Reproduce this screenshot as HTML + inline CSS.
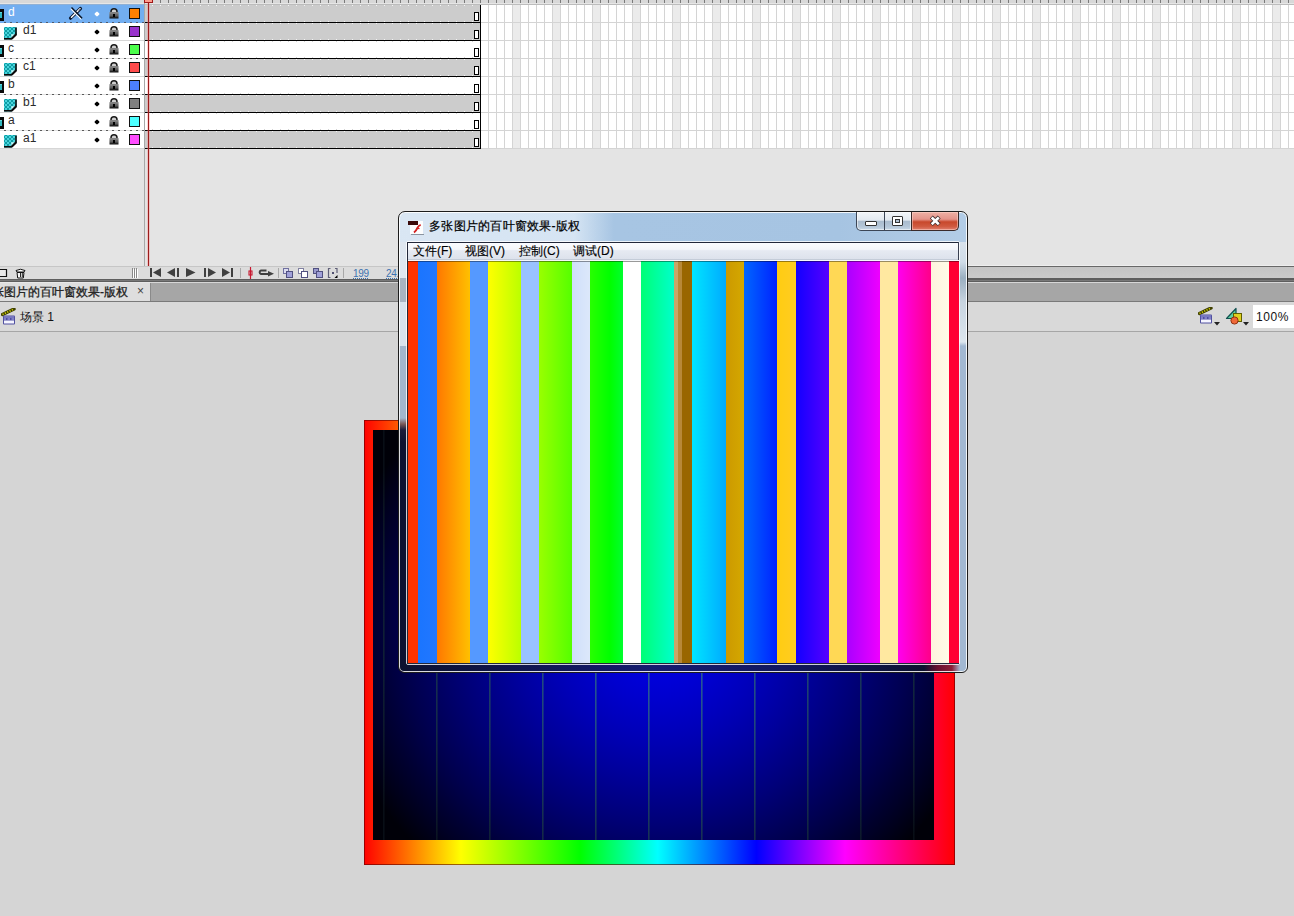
<!DOCTYPE html><html><head><meta charset="utf-8"><style>
*{margin:0;padding:0;box-sizing:border-box}
html,body{width:1294px;height:916px;overflow:hidden;background:#d5d5d5;font-family:"Liberation Sans",sans-serif;}
.a{position:absolute}
</style></head><body><div class="a" style="left:0;top:0;width:1294px;height:266px;background:#e4e4e4"></div>
<div class="a" style="left:0;top:0;width:1294px;height:4px;background:#d8d8d8"></div>
<div class="a" style="left:145px;top:0;width:1149px;height:4px;background:repeating-linear-gradient(to right,transparent 0 7px,#7a7a7a 7px 8px)"></div>
<div class="a" style="left:0;top:3px;width:1294px;height:1px;background:#e6e6e6"></div>
<div class="a" style="left:0;top:4px;width:144px;height:1px;background:#90b0d4"></div>
<div class="a" style="left:144px;top:4px;width:1150px;height:1px;background:#bcbcbc"></div>
<div class="a" style="left:145px;top:5px;width:1149px;height:144px;background:#fff"></div>
<div class="a" style="left:512px;top:5px;width:782px;height:144px;background:repeating-linear-gradient(to right,transparent 0 1px,#ebebeb 1px 8px,transparent 8px 40px)"></div>
<div class="a" style="left:145px;top:5px;width:1149px;height:144px;background:repeating-linear-gradient(to right,transparent 0 7px,#d4d4d4 7px 8px)"></div>
<div class="a" style="left:145px;top:5px;width:1149px;height:144px;background:repeating-linear-gradient(to bottom,transparent 0 17px,#d4d4d4 17px 18px)"></div>
<div class="a" style="left:0;top:5px;width:144px;height:17px;background:#72aef0"></div>
<div class="a" style="left:0;top:22px;width:144px;height:1px;background:repeating-linear-gradient(to right,#72aef0 0 4px,#4e5a6c 4px 6px)"></div>
<svg class="a" style="left:0;top:9px" width="5" height="13" viewBox="0 0 5 13"><rect x="-8" y="0" width="12" height="12" fill="#0a0a0a"/><rect x="-6" y="3" width="8" height="6" fill="#30b8c0"/><rect x="-6" y="3" width="8" height="1" fill="#60d8e0"/></svg>
<div class="a" style="left:8px;top:5px;font-size:12px;line-height:14px;color:#fff">d</div>
<svg class="a" style="left:66px;top:4px" width="18" height="18" viewBox="0 0 18 18"><path d="M4.5 14.2L14.5 4.5" stroke="#0a1830" stroke-width="3.2" stroke-linecap="round"/><path d="M5.5 13.2L14 4.8" stroke="#fff" stroke-width="1.5" stroke-linecap="round"/><path d="M13 6.5L14.5 5" stroke="#0a1830" stroke-width="1"/><path d="M4.8 4.6L15.4 15.3" stroke="#fff" stroke-width="1.1"/><path d="M5.5 3.6L16.1 14.3" stroke="#061020" stroke-width="1.4"/></svg>
<div class="a" style="left:94.5px;top:11.5px;width:4px;height:4px;background:#fff;border-radius:1px;transform:rotate(45deg)"></div>
<svg class="a" style="left:109px;top:8px" width="10" height="11" viewBox="0 0 10 11"><defs><linearGradient id="lk0" x1="0" y1="0" x2="0" y2="1"><stop offset="0" stop-color="#8a8a8a"/><stop offset="1" stop-color="#101010"/></linearGradient></defs><path d="M2 4.5V3.8A3 3 0 0 1 8 3.8V4.5" fill="#cfcfcf" stroke="#1a1a1a" stroke-width="1.5"/><rect x="0.5" y="4" width="9" height="6.5" fill="url(#lk0)"/><rect x="0.5" y="5.5" width="9" height="0.8" fill="#aaa" opacity="0.6"/><rect x="0.5" y="7.5" width="9" height="0.8" fill="#aaa" opacity="0.5"/><rect x="4" y="6" width="2" height="3" fill="#000"/></svg>
<div class="a" style="left:129px;top:8px;width:11px;height:11px;background:#ff8000;border:1.5px solid #111"></div>
<div class="a" style="left:145px;top:5px;width:335px;height:17px;background:#cccccc"></div>
<div class="a" style="left:145px;top:5px;width:335px;height:1px;background:repeating-linear-gradient(to right,transparent 0 7px,#f4f4f4 7px 8px)"></div>
<div class="a" style="left:145px;top:21px;width:335px;height:1px;background:repeating-linear-gradient(to right,transparent 0 7px,#f4f4f4 7px 8px)"></div>
<div class="a" style="left:145px;top:22px;width:336px;height:1px;background:#000"></div>
<div class="a" style="left:480px;top:5px;width:1px;height:17px;background:#000"></div>
<div class="a" style="left:474px;top:12px;width:5px;height:9px;background:#fff;border:1px solid #000"></div>
<div class="a" style="left:0;top:23px;width:144px;height:17px;background:#ffffff"></div>
<div class="a" style="left:0;top:40px;width:144px;height:1px;background:#d6d6d6"></div>
<svg class="a" style="left:4px;top:27px" width="14" height="13" viewBox="0 0 14 13"><defs><pattern id="ck1" width="4" height="4" patternUnits="userSpaceOnUse" x="1" y="1"><rect width="4" height="4" fill="#109ca4"/><rect width="2" height="2" fill="#48d4dc"/><rect x="2" y="2" width="2" height="2" fill="#48d4dc"/></pattern></defs><path d="M0 0H12.5V7.5L7.5 12.5H0Z" fill="url(#ck1)"/><path d="M12 0.5V7.8L7.8 12" fill="none" stroke="#0a0a0a" stroke-width="1.6"/><path d="M0 11.8H7.6" stroke="#0a0a0a" stroke-width="1.6"/><path d="M7.5 11V7.5H11" fill="none"/><path d="M7.3 11.3L7.3 7.3L11.3 7.3Z" fill="#c4f6f8"/><path d="M6.8 12.2L12.2 6.8" stroke="#0a0a0a" stroke-width="1.5"/></svg>
<div class="a" style="left:23px;top:23px;font-size:12px;line-height:14px;color:#2a2a2a">d1</div>
<div class="a" style="left:94.5px;top:29.5px;width:4px;height:4px;background:#000;border-radius:1px;transform:rotate(45deg)"></div>
<svg class="a" style="left:109px;top:26px" width="10" height="11" viewBox="0 0 10 11"><defs><linearGradient id="lk1" x1="0" y1="0" x2="0" y2="1"><stop offset="0" stop-color="#8a8a8a"/><stop offset="1" stop-color="#101010"/></linearGradient></defs><path d="M2 4.5V3.8A3 3 0 0 1 8 3.8V4.5" fill="#cfcfcf" stroke="#1a1a1a" stroke-width="1.5"/><rect x="0.5" y="4" width="9" height="6.5" fill="url(#lk1)"/><rect x="0.5" y="5.5" width="9" height="0.8" fill="#aaa" opacity="0.6"/><rect x="0.5" y="7.5" width="9" height="0.8" fill="#aaa" opacity="0.5"/><rect x="4" y="6" width="2" height="3" fill="#000"/></svg>
<div class="a" style="left:129px;top:26px;width:11px;height:11px;background:#9933cc;border:1.5px solid #111"></div>
<div class="a" style="left:145px;top:23px;width:335px;height:17px;background:#cccccc"></div>
<div class="a" style="left:145px;top:23px;width:335px;height:1px;background:repeating-linear-gradient(to right,transparent 0 7px,#f4f4f4 7px 8px)"></div>
<div class="a" style="left:145px;top:39px;width:335px;height:1px;background:repeating-linear-gradient(to right,transparent 0 7px,#f4f4f4 7px 8px)"></div>
<div class="a" style="left:145px;top:40px;width:336px;height:1px;background:#000"></div>
<div class="a" style="left:480px;top:23px;width:1px;height:17px;background:#000"></div>
<div class="a" style="left:474px;top:30px;width:5px;height:9px;background:#fff;border:1px solid #000"></div>
<div class="a" style="left:0;top:41px;width:144px;height:17px;background:#ffffff"></div>
<div class="a" style="left:0;top:58px;width:144px;height:1px;background:repeating-linear-gradient(to right,#e0e0e0 0 4px,#5a5a5a 4px 6px)"></div>
<svg class="a" style="left:0;top:45px" width="5" height="13" viewBox="0 0 5 13"><rect x="-8" y="0" width="12" height="12" fill="#0a0a0a"/><rect x="-6" y="3" width="8" height="6" fill="#30b8c0"/><rect x="-6" y="3" width="8" height="1" fill="#60d8e0"/></svg>
<div class="a" style="left:8px;top:41px;font-size:12px;line-height:14px;color:#2a2a2a">c</div>
<div class="a" style="left:94.5px;top:47.5px;width:4px;height:4px;background:#000;border-radius:1px;transform:rotate(45deg)"></div>
<svg class="a" style="left:109px;top:44px" width="10" height="11" viewBox="0 0 10 11"><defs><linearGradient id="lk2" x1="0" y1="0" x2="0" y2="1"><stop offset="0" stop-color="#8a8a8a"/><stop offset="1" stop-color="#101010"/></linearGradient></defs><path d="M2 4.5V3.8A3 3 0 0 1 8 3.8V4.5" fill="#cfcfcf" stroke="#1a1a1a" stroke-width="1.5"/><rect x="0.5" y="4" width="9" height="6.5" fill="url(#lk2)"/><rect x="0.5" y="5.5" width="9" height="0.8" fill="#aaa" opacity="0.6"/><rect x="0.5" y="7.5" width="9" height="0.8" fill="#aaa" opacity="0.5"/><rect x="4" y="6" width="2" height="3" fill="#000"/></svg>
<div class="a" style="left:129px;top:44px;width:11px;height:11px;background:#4cff4c;border:1.5px solid #111"></div>
<div class="a" style="left:145px;top:41px;width:335px;height:17px;background:#ffffff"></div>
<div class="a" style="left:145px;top:41px;width:335px;height:1px;background:repeating-linear-gradient(to right,transparent 0 7px,#d4d4d4 7px 8px)"></div>
<div class="a" style="left:145px;top:57px;width:335px;height:1px;background:repeating-linear-gradient(to right,transparent 0 7px,#d4d4d4 7px 8px)"></div>
<div class="a" style="left:145px;top:58px;width:336px;height:1px;background:#000"></div>
<div class="a" style="left:480px;top:41px;width:1px;height:17px;background:#000"></div>
<div class="a" style="left:474px;top:48px;width:5px;height:9px;background:#fff;border:1px solid #000"></div>
<div class="a" style="left:0;top:59px;width:144px;height:17px;background:#ffffff"></div>
<div class="a" style="left:0;top:76px;width:144px;height:1px;background:#d6d6d6"></div>
<svg class="a" style="left:4px;top:63px" width="14" height="13" viewBox="0 0 14 13"><defs><pattern id="ck3" width="4" height="4" patternUnits="userSpaceOnUse" x="1" y="1"><rect width="4" height="4" fill="#109ca4"/><rect width="2" height="2" fill="#48d4dc"/><rect x="2" y="2" width="2" height="2" fill="#48d4dc"/></pattern></defs><path d="M0 0H12.5V7.5L7.5 12.5H0Z" fill="url(#ck3)"/><path d="M12 0.5V7.8L7.8 12" fill="none" stroke="#0a0a0a" stroke-width="1.6"/><path d="M0 11.8H7.6" stroke="#0a0a0a" stroke-width="1.6"/><path d="M7.5 11V7.5H11" fill="none"/><path d="M7.3 11.3L7.3 7.3L11.3 7.3Z" fill="#c4f6f8"/><path d="M6.8 12.2L12.2 6.8" stroke="#0a0a0a" stroke-width="1.5"/></svg>
<div class="a" style="left:23px;top:59px;font-size:12px;line-height:14px;color:#2a2a2a">c1</div>
<div class="a" style="left:94.5px;top:65.5px;width:4px;height:4px;background:#000;border-radius:1px;transform:rotate(45deg)"></div>
<svg class="a" style="left:109px;top:62px" width="10" height="11" viewBox="0 0 10 11"><defs><linearGradient id="lk3" x1="0" y1="0" x2="0" y2="1"><stop offset="0" stop-color="#8a8a8a"/><stop offset="1" stop-color="#101010"/></linearGradient></defs><path d="M2 4.5V3.8A3 3 0 0 1 8 3.8V4.5" fill="#cfcfcf" stroke="#1a1a1a" stroke-width="1.5"/><rect x="0.5" y="4" width="9" height="6.5" fill="url(#lk3)"/><rect x="0.5" y="5.5" width="9" height="0.8" fill="#aaa" opacity="0.6"/><rect x="0.5" y="7.5" width="9" height="0.8" fill="#aaa" opacity="0.5"/><rect x="4" y="6" width="2" height="3" fill="#000"/></svg>
<div class="a" style="left:129px;top:62px;width:11px;height:11px;background:#ff4c4c;border:1.5px solid #111"></div>
<div class="a" style="left:145px;top:59px;width:335px;height:17px;background:#cccccc"></div>
<div class="a" style="left:145px;top:59px;width:335px;height:1px;background:repeating-linear-gradient(to right,transparent 0 7px,#f4f4f4 7px 8px)"></div>
<div class="a" style="left:145px;top:75px;width:335px;height:1px;background:repeating-linear-gradient(to right,transparent 0 7px,#f4f4f4 7px 8px)"></div>
<div class="a" style="left:145px;top:76px;width:336px;height:1px;background:#000"></div>
<div class="a" style="left:480px;top:59px;width:1px;height:17px;background:#000"></div>
<div class="a" style="left:474px;top:66px;width:5px;height:9px;background:#fff;border:1px solid #000"></div>
<div class="a" style="left:0;top:77px;width:144px;height:17px;background:#ffffff"></div>
<div class="a" style="left:0;top:94px;width:144px;height:1px;background:repeating-linear-gradient(to right,#e0e0e0 0 4px,#5a5a5a 4px 6px)"></div>
<svg class="a" style="left:0;top:81px" width="5" height="13" viewBox="0 0 5 13"><rect x="-8" y="0" width="12" height="12" fill="#0a0a0a"/><rect x="-6" y="3" width="8" height="6" fill="#30b8c0"/><rect x="-6" y="3" width="8" height="1" fill="#60d8e0"/></svg>
<div class="a" style="left:8px;top:77px;font-size:12px;line-height:14px;color:#2a2a2a">b</div>
<div class="a" style="left:94.5px;top:83.5px;width:4px;height:4px;background:#000;border-radius:1px;transform:rotate(45deg)"></div>
<svg class="a" style="left:109px;top:80px" width="10" height="11" viewBox="0 0 10 11"><defs><linearGradient id="lk4" x1="0" y1="0" x2="0" y2="1"><stop offset="0" stop-color="#8a8a8a"/><stop offset="1" stop-color="#101010"/></linearGradient></defs><path d="M2 4.5V3.8A3 3 0 0 1 8 3.8V4.5" fill="#cfcfcf" stroke="#1a1a1a" stroke-width="1.5"/><rect x="0.5" y="4" width="9" height="6.5" fill="url(#lk4)"/><rect x="0.5" y="5.5" width="9" height="0.8" fill="#aaa" opacity="0.6"/><rect x="0.5" y="7.5" width="9" height="0.8" fill="#aaa" opacity="0.5"/><rect x="4" y="6" width="2" height="3" fill="#000"/></svg>
<div class="a" style="left:129px;top:80px;width:11px;height:11px;background:#4c7fff;border:1.5px solid #111"></div>
<div class="a" style="left:145px;top:77px;width:335px;height:17px;background:#ffffff"></div>
<div class="a" style="left:145px;top:77px;width:335px;height:1px;background:repeating-linear-gradient(to right,transparent 0 7px,#d4d4d4 7px 8px)"></div>
<div class="a" style="left:145px;top:93px;width:335px;height:1px;background:repeating-linear-gradient(to right,transparent 0 7px,#d4d4d4 7px 8px)"></div>
<div class="a" style="left:145px;top:94px;width:336px;height:1px;background:#000"></div>
<div class="a" style="left:480px;top:77px;width:1px;height:17px;background:#000"></div>
<div class="a" style="left:474px;top:84px;width:5px;height:9px;background:#fff;border:1px solid #000"></div>
<div class="a" style="left:0;top:95px;width:144px;height:17px;background:#ffffff"></div>
<div class="a" style="left:0;top:112px;width:144px;height:1px;background:#d6d6d6"></div>
<svg class="a" style="left:4px;top:99px" width="14" height="13" viewBox="0 0 14 13"><defs><pattern id="ck5" width="4" height="4" patternUnits="userSpaceOnUse" x="1" y="1"><rect width="4" height="4" fill="#109ca4"/><rect width="2" height="2" fill="#48d4dc"/><rect x="2" y="2" width="2" height="2" fill="#48d4dc"/></pattern></defs><path d="M0 0H12.5V7.5L7.5 12.5H0Z" fill="url(#ck5)"/><path d="M12 0.5V7.8L7.8 12" fill="none" stroke="#0a0a0a" stroke-width="1.6"/><path d="M0 11.8H7.6" stroke="#0a0a0a" stroke-width="1.6"/><path d="M7.5 11V7.5H11" fill="none"/><path d="M7.3 11.3L7.3 7.3L11.3 7.3Z" fill="#c4f6f8"/><path d="M6.8 12.2L12.2 6.8" stroke="#0a0a0a" stroke-width="1.5"/></svg>
<div class="a" style="left:23px;top:95px;font-size:12px;line-height:14px;color:#2a2a2a">b1</div>
<div class="a" style="left:94.5px;top:101.5px;width:4px;height:4px;background:#000;border-radius:1px;transform:rotate(45deg)"></div>
<svg class="a" style="left:109px;top:98px" width="10" height="11" viewBox="0 0 10 11"><defs><linearGradient id="lk5" x1="0" y1="0" x2="0" y2="1"><stop offset="0" stop-color="#8a8a8a"/><stop offset="1" stop-color="#101010"/></linearGradient></defs><path d="M2 4.5V3.8A3 3 0 0 1 8 3.8V4.5" fill="#cfcfcf" stroke="#1a1a1a" stroke-width="1.5"/><rect x="0.5" y="4" width="9" height="6.5" fill="url(#lk5)"/><rect x="0.5" y="5.5" width="9" height="0.8" fill="#aaa" opacity="0.6"/><rect x="0.5" y="7.5" width="9" height="0.8" fill="#aaa" opacity="0.5"/><rect x="4" y="6" width="2" height="3" fill="#000"/></svg>
<div class="a" style="left:129px;top:98px;width:11px;height:11px;background:#808080;border:1.5px solid #111"></div>
<div class="a" style="left:145px;top:95px;width:335px;height:17px;background:#cccccc"></div>
<div class="a" style="left:145px;top:95px;width:335px;height:1px;background:repeating-linear-gradient(to right,transparent 0 7px,#f4f4f4 7px 8px)"></div>
<div class="a" style="left:145px;top:111px;width:335px;height:1px;background:repeating-linear-gradient(to right,transparent 0 7px,#f4f4f4 7px 8px)"></div>
<div class="a" style="left:145px;top:112px;width:336px;height:1px;background:#000"></div>
<div class="a" style="left:480px;top:95px;width:1px;height:17px;background:#000"></div>
<div class="a" style="left:474px;top:102px;width:5px;height:9px;background:#fff;border:1px solid #000"></div>
<div class="a" style="left:0;top:113px;width:144px;height:17px;background:#ffffff"></div>
<div class="a" style="left:0;top:130px;width:144px;height:1px;background:repeating-linear-gradient(to right,#e0e0e0 0 4px,#5a5a5a 4px 6px)"></div>
<svg class="a" style="left:0;top:117px" width="5" height="13" viewBox="0 0 5 13"><rect x="-8" y="0" width="12" height="12" fill="#0a0a0a"/><rect x="-6" y="3" width="8" height="6" fill="#30b8c0"/><rect x="-6" y="3" width="8" height="1" fill="#60d8e0"/></svg>
<div class="a" style="left:8px;top:113px;font-size:12px;line-height:14px;color:#2a2a2a">a</div>
<div class="a" style="left:94.5px;top:119.5px;width:4px;height:4px;background:#000;border-radius:1px;transform:rotate(45deg)"></div>
<svg class="a" style="left:109px;top:116px" width="10" height="11" viewBox="0 0 10 11"><defs><linearGradient id="lk6" x1="0" y1="0" x2="0" y2="1"><stop offset="0" stop-color="#8a8a8a"/><stop offset="1" stop-color="#101010"/></linearGradient></defs><path d="M2 4.5V3.8A3 3 0 0 1 8 3.8V4.5" fill="#cfcfcf" stroke="#1a1a1a" stroke-width="1.5"/><rect x="0.5" y="4" width="9" height="6.5" fill="url(#lk6)"/><rect x="0.5" y="5.5" width="9" height="0.8" fill="#aaa" opacity="0.6"/><rect x="0.5" y="7.5" width="9" height="0.8" fill="#aaa" opacity="0.5"/><rect x="4" y="6" width="2" height="3" fill="#000"/></svg>
<div class="a" style="left:129px;top:116px;width:11px;height:11px;background:#4cffff;border:1.5px solid #111"></div>
<div class="a" style="left:145px;top:113px;width:335px;height:17px;background:#ffffff"></div>
<div class="a" style="left:145px;top:113px;width:335px;height:1px;background:repeating-linear-gradient(to right,transparent 0 7px,#d4d4d4 7px 8px)"></div>
<div class="a" style="left:145px;top:129px;width:335px;height:1px;background:repeating-linear-gradient(to right,transparent 0 7px,#d4d4d4 7px 8px)"></div>
<div class="a" style="left:145px;top:130px;width:336px;height:1px;background:#000"></div>
<div class="a" style="left:480px;top:113px;width:1px;height:17px;background:#000"></div>
<div class="a" style="left:474px;top:120px;width:5px;height:9px;background:#fff;border:1px solid #000"></div>
<div class="a" style="left:0;top:131px;width:144px;height:17px;background:#ffffff"></div>
<div class="a" style="left:0;top:148px;width:144px;height:1px;background:#d6d6d6"></div>
<svg class="a" style="left:4px;top:135px" width="14" height="13" viewBox="0 0 14 13"><defs><pattern id="ck7" width="4" height="4" patternUnits="userSpaceOnUse" x="1" y="1"><rect width="4" height="4" fill="#109ca4"/><rect width="2" height="2" fill="#48d4dc"/><rect x="2" y="2" width="2" height="2" fill="#48d4dc"/></pattern></defs><path d="M0 0H12.5V7.5L7.5 12.5H0Z" fill="url(#ck7)"/><path d="M12 0.5V7.8L7.8 12" fill="none" stroke="#0a0a0a" stroke-width="1.6"/><path d="M0 11.8H7.6" stroke="#0a0a0a" stroke-width="1.6"/><path d="M7.5 11V7.5H11" fill="none"/><path d="M7.3 11.3L7.3 7.3L11.3 7.3Z" fill="#c4f6f8"/><path d="M6.8 12.2L12.2 6.8" stroke="#0a0a0a" stroke-width="1.5"/></svg>
<div class="a" style="left:23px;top:131px;font-size:12px;line-height:14px;color:#2a2a2a">a1</div>
<div class="a" style="left:94.5px;top:137.5px;width:4px;height:4px;background:#000;border-radius:1px;transform:rotate(45deg)"></div>
<svg class="a" style="left:109px;top:134px" width="10" height="11" viewBox="0 0 10 11"><defs><linearGradient id="lk7" x1="0" y1="0" x2="0" y2="1"><stop offset="0" stop-color="#8a8a8a"/><stop offset="1" stop-color="#101010"/></linearGradient></defs><path d="M2 4.5V3.8A3 3 0 0 1 8 3.8V4.5" fill="#cfcfcf" stroke="#1a1a1a" stroke-width="1.5"/><rect x="0.5" y="4" width="9" height="6.5" fill="url(#lk7)"/><rect x="0.5" y="5.5" width="9" height="0.8" fill="#aaa" opacity="0.6"/><rect x="0.5" y="7.5" width="9" height="0.8" fill="#aaa" opacity="0.5"/><rect x="4" y="6" width="2" height="3" fill="#000"/></svg>
<div class="a" style="left:129px;top:134px;width:11px;height:11px;background:#ff4cff;border:1.5px solid #111"></div>
<div class="a" style="left:145px;top:131px;width:335px;height:17px;background:#cccccc"></div>
<div class="a" style="left:145px;top:131px;width:335px;height:1px;background:repeating-linear-gradient(to right,transparent 0 7px,#f4f4f4 7px 8px)"></div>
<div class="a" style="left:145px;top:147px;width:335px;height:1px;background:repeating-linear-gradient(to right,transparent 0 7px,#f4f4f4 7px 8px)"></div>
<div class="a" style="left:145px;top:148px;width:336px;height:1px;background:#000"></div>
<div class="a" style="left:480px;top:131px;width:1px;height:17px;background:#000"></div>
<div class="a" style="left:474px;top:138px;width:5px;height:9px;background:#fff;border:1px solid #000"></div>
<div class="a" style="left:144px;top:0;width:1px;height:279px;background:#a8a8a8"></div>
<div class="a" style="left:147px;top:0;width:3px;height:266px;background:rgba(255,120,120,0.3)"></div>
<div class="a" style="left:148px;top:0;width:1px;height:266px;background:#9c1c1c"></div>
<div class="a" style="left:144px;top:-1px;width:9px;height:4px;background:#ff9c8c;border:1px solid #a01818"></div>
<div class="a" style="left:0;top:266px;width:1294px;height:13px;background:#dcdcdc;border-top:1px solid #c6c6c6"></div>
<div class="a" style="left:398px;top:265px;width:896px;height:1px;background:#eeeeee"></div>
<div class="a" style="left:398px;top:266px;width:896px;height:12px;background:linear-gradient(#c4c4c4,#cacaca);border-top:1px solid #686868"></div>
<div class="a" style="left:398px;top:278px;width:896px;height:1px;background:#5e5e5e"></div>
<div class="a" style="left:0;top:279px;width:1294px;height:3px;background:linear-gradient(#5e5e5e 0 1px,#787878 1px 2px,#5e5e5e 2px 3px)"></div>
<div class="a" style="left:0;top:282px;width:1294px;height:1px;background:#d6d6d6"></div>
<svg class="a" style="left:0;top:266px" width="400" height="13" viewBox="0 266 400 13"><path d="M-4 269.5H6.5V276.5H-4" fill="#e8e8e8" stroke="#111" stroke-width="1.2"/><path d="M16 270.5Q20.5 268 25 270.5L24 272H17Z" fill="#fff" stroke="#111" stroke-width="1"/><path d="M17 272.5H24L23.3 278H17.7Z" fill="#f4f4f4" stroke="#111" stroke-width="1"/><path d="M20.5 273V277M22.3 273V277" stroke="#111" stroke-width="0.9"/><path d="M132.5 268V278M134.5 268V278M136.5 268V278" stroke="#888" stroke-width="1"/><path d="M133.5 269V278M135.5 269V278M137.5 269V278" stroke="#fff" stroke-width="1"/><rect x="150" y="268" width="2" height="9" fill="#404040"/><path d="M161 268V277L153 272.5Z" fill="#404040"/><path d="M175 268V277L167 272.5Z" fill="#404040"/><rect x="177" y="268" width="2" height="9" fill="#404040"/><path d="M186 268V277L195.5 272.5Z" fill="#404040"/><rect x="204" y="268" width="2" height="9" fill="#404040"/><path d="M208 268V277L216 272.5Z" fill="#404040"/><path d="M222 268V277L230 272.5Z" fill="#404040"/><rect x="231" y="268" width="2" height="9" fill="#404040"/><rect x="240" y="268" width="1" height="10" fill="#a8a8a8"/><path d="M250.5 267V279" stroke="#c81830" stroke-width="1.2"/><rect x="249" y="271" width="3" height="4" fill="none" stroke="#c81830" stroke-width="1.1"/><path d="M266.5 270.5H261A1.8 1.8 0 0 0 261 274H268" fill="none" stroke="#404040" stroke-width="2"/><path d="M268 271V276.5L274 273.7Z" fill="#404040"/><rect x="278" y="268" width="1" height="10" fill="#a8a8a8"/><rect x="283.5" y="268.5" width="5" height="5" fill="#dcdcf0" stroke="#7070a0" stroke-width="1"/><rect x="286.5" y="271.5" width="6" height="6" fill="#a0a0d8" stroke="#505080" stroke-width="1"/><rect x="298.5" y="268.5" width="5" height="5" fill="#fff" stroke="#8080a0" stroke-width="1"/><rect x="301.5" y="271.5" width="6" height="6" fill="#fff" stroke="#505080" stroke-width="1"/><rect x="313.5" y="268.5" width="5" height="5" fill="#9898cc" stroke="#505080" stroke-width="1"/><rect x="316.5" y="271.5" width="6" height="6" fill="#a0a0d8" stroke="#505080" stroke-width="1"/><path d="M330.5 268.5H328.5V277.5H330.5M335 268.5H337V273" fill="none" stroke="#606078" stroke-width="1.2"/><rect x="332" y="272" width="2" height="2" fill="#505070"/><path d="M337.5 275V278H334.5Z" fill="#000"/><rect x="343" y="268" width="1" height="10" fill="#a8a8a8"/></svg>
<div class="a" style="left:353px;top:268px;font-size:10px;line-height:11px;color:#3c72b0;letter-spacing:-0.3px">199</div>
<div class="a" style="left:353px;top:278px;width:15px;height:1px;background:repeating-linear-gradient(to right,#3c72b0 0 1px,transparent 1px 2px)"></div>
<div class="a" style="left:386px;top:268px;font-size:10px;line-height:11px;color:#3c72b0;letter-spacing:-0.3px">24.0</div>
<div class="a" style="left:386px;top:278px;width:20px;height:1px;background:repeating-linear-gradient(to right,#3c72b0 0 1px,transparent 1px 2px)"></div>
<div class="a" style="left:0;top:283px;width:1294px;height:19px;background:#a6a6a6;border-bottom:1px solid #7a7a7a"></div>
<div class="a" style="left:0;top:282px;width:150px;height:19px;background:#dedede;border-top:1px solid #e8e8e8"></div>
<div class="a" style="left:150px;top:283px;width:1px;height:18px;background:#8a8a8a"></div>
<div class="a" style="left:-20px;top:286px;font-size:12px;line-height:13px;color:#222;white-space:nowrap;-webkit-text-stroke:0.3px #222">多张图片的百叶窗效果-版权</div>
<div class="a" style="left:137px;top:284px;font-size:12px;line-height:15px;color:#444">×</div>
<div class="a" style="left:0;top:302px;width:1294px;height:30px;background:#d9d9d9;border-bottom:1px solid #a6a6a6"></div>
<div class="a" style="left:20px;top:310px;font-size:12px;line-height:15px;color:#111;white-space:nowrap">场景 1</div>
<div class="a" style="left:1253px;top:305px;width:41px;height:23px;background:#fff"></div>
<div class="a" style="left:1256px;top:310px;font-size:12px;line-height:14px;color:#111;letter-spacing:0.6px">100%</div>
<svg class="a" style="left:1px;top:308px" width="16" height="17" viewBox="0 0 16 17"><path d="M1.5 6.5L13 1" stroke="#404000" stroke-width="3.4" stroke-linecap="round"/><path d="M1.5 6.5L13 1" stroke="#c8c800" stroke-width="1.8" stroke-dasharray="1.2 1.4"/><rect x="2" y="7.5" width="12" height="9" rx="1" fill="#5050a0"/><rect x="3" y="8.5" width="10" height="1" fill="#a0a0e0"/><path d="M3 11H5M6.5 11H9M10.5 11H13" stroke="#b0b0f0" stroke-width="1"/><rect x="3" y="12.5" width="10" height="3" fill="#f4f4ff"/></svg>
<svg class="a" style="left:1198px;top:307px" width="16" height="17" viewBox="0 0 16 17"><path d="M1.5 6.5L13 1" stroke="#404000" stroke-width="3.4" stroke-linecap="round"/><path d="M1.5 6.5L13 1" stroke="#c8c800" stroke-width="1.8" stroke-dasharray="1.2 1.4"/><rect x="2" y="7.5" width="12" height="9" rx="1" fill="#5050a0"/><rect x="3" y="8.5" width="10" height="1" fill="#a0a0e0"/><path d="M3 11H5M6.5 11H9M10.5 11H13" stroke="#b0b0f0" stroke-width="1"/><rect x="3" y="12.5" width="10" height="3" fill="#f4f4ff"/></svg>
<svg class="a" style="left:1213px;top:321px" width="8" height="6" viewBox="0 0 8 6"><path d="M1 1H7L4 4.5Z" fill="#222"/></svg>
<svg class="a" style="left:1225px;top:307px" width="18" height="19" viewBox="0 0 18 19"><path d="M1.5 11.5L11 1.5V11.5Z" fill="#60d0a0" stroke="#105050" stroke-width="1.2" stroke-linejoin="round"/><rect x="8.5" y="6.5" width="8" height="8" fill="#e0d020" stroke="#606000" stroke-width="1"/><circle cx="9.5" cy="13.5" r="3.6" fill="#f06838" stroke="#903010" stroke-width="1"/></svg>
<svg class="a" style="left:1242px;top:321px" width="8" height="6" viewBox="0 0 8 6"><path d="M1 1H7L4 4.5Z" fill="#222"/></svg>
<div class="a" style="left:364px;top:420px;width:591px;height:445px;background:linear-gradient(to right,#f00 0%,#ff0 16.4%,#0f0 36.6%,#0ff 49.7%,#00f 66.4%,#f0f 81.4%,#f00 100%);box-shadow:inset 0 0 0 1px rgba(90,0,0,0.6)"></div>
<div class="a" style="left:373px;top:430px;width:561px;height:410px;background:#000008 radial-gradient(332px 306px at 286.7px 208px,rgb(0,0,231) 0.0%,rgb(0,0,227) 5.0%,rgb(0,0,221) 10.0%,rgb(0,0,214) 15.0%,rgb(0,0,206) 20.0%,rgb(0,0,197) 25.0%,rgb(0,0,188) 30.0%,rgb(0,0,178) 35.0%,rgb(0,0,167) 40.0%,rgb(0,0,156) 45.0%,rgb(0,0,144) 50.0%,rgb(0,0,132) 55.0%,rgb(0,0,120) 60.0%,rgb(0,0,107) 65.0%,rgb(0,0,94) 70.0%,rgb(0,0,81) 75.0%,rgb(0,0,67) 80.0%,rgb(0,0,52) 85.0%,rgb(0,0,38) 90.0%,rgb(0,0,23) 95.0%,rgb(0,0,8) 100.0%)"></div>
<div class="a" style="left:373px;top:430px;width:561px;height:410px;background:rgb(8,14,22) radial-gradient(332px 306px at 286.7px 208px,rgb(42,94,165) 0.0%,rgb(41,92,162) 5.0%,rgb(40,90,158) 10.0%,rgb(39,88,154) 15.0%,rgb(38,85,149) 20.0%,rgb(36,82,143) 25.0%,rgb(35,78,137) 30.0%,rgb(33,75,131) 35.0%,rgb(32,71,124) 40.0%,rgb(30,67,117) 45.0%,rgb(28,63,109) 50.0%,rgb(27,58,101) 55.0%,rgb(25,54,93) 60.0%,rgb(23,49,85) 65.0%,rgb(21,44,77) 70.0%,rgb(19,40,68) 75.0%,rgb(16,35,59) 80.0%,rgb(14,29,50) 85.0%,rgb(12,24,41) 90.0%,rgb(10,19,31) 95.0%,rgb(8,14,22) 100.0%);-webkit-mask-image:repeating-linear-gradient(to right,transparent 0 10px,#000 10px 11px,rgba(0,0,0,0.6) 11px 12px,transparent 12px 53px);mask-image:repeating-linear-gradient(to right,transparent 0 10px,#000 10px 11px,rgba(0,0,0,0.6) 11px 12px,transparent 12px 53px)"></div>
<div class="a" style="left:399px;top:212px;width:568px;height:30px;border-radius:6px 6px 0 0;background:linear-gradient(to right,rgba(220,232,244,0.95) 0px,rgba(216,230,244,0.95) 175px,rgba(168,198,228,0) 215px),linear-gradient(to right,#a8c6e4 0px,#a6c4e2 440px,#b2cce6 560px)"></div>
<div class="a" style="left:399px;top:242px;width:8px;height:430px;border-radius:0 0 0 5px;background:linear-gradient(to bottom,#dfe7f0 0px,#dfe7f0 36px,#a8b4c2 36px,#a8b4c2 60px,#d8e2ec 60px,#d8e2ec 104px,#a2b6cc 104px,#a2b6cc 176px,#7a5a58 182px,#1a1c3a 188px,#0d1230 200px,#0d1230 430px)"></div>
<div class="a" style="left:959px;top:242px;width:8px;height:430px;border-radius:0 0 5px 0;background:linear-gradient(to bottom,#d8e2ec 0px,#d0dce8 20px,#9aaec0 36px,#c8d4e0 60px,#dde6ee 100px,#a2b8d2 104px,#a2b8d2 430px)"></div>
<div class="a" style="left:404px;top:664px;width:558px;height:8px;background:linear-gradient(to right,#0d1230 0px,#121860 180px,#161c70 250px,#121860 380px,#0d1230 520px,#6a1030 534px,#8a2038 548px,#a2b8d2 556px)"></div>
<div class="a" style="left:398px;top:211px;width:570px;height:462px;border:1px solid #1c1c1c;border-radius:7px 7px 6px 6px;box-shadow:inset 0 0 0 1px rgba(255,255,255,0.85)"></div>
<div class="a" style="left:406px;top:241px;width:554px;height:424px;border:1px solid rgba(255,255,255,0.8);border-radius:2px"></div>
<div class="a" style="left:407px;top:242px;width:552px;height:422px;border:1px solid #22283a;border-right:none;background:#f0f0f0"></div>
<div class="a" style="left:408px;top:243px;width:551px;height:16px;background:linear-gradient(#fbfcfe 0%,#f4f6fa 40%,#e6eaf2 48%,#dde2ec 100%)"></div>
<div class="a" style="left:408px;top:259px;width:551px;height:1px;background:#c4ccd8"></div>
<div class="a" style="left:958px;top:242px;width:1px;height:19px;background:#3a4050"></div>
<div class="a" style="left:408px;top:260px;width:551px;height:1px;background:#f6f8fb"></div>
<div class="a" style="left:413px;top:244px;font-size:12px;line-height:15px;color:#000;white-space:nowrap;-webkit-text-stroke:0.15px #000">文件(F)</div>
<div class="a" style="left:465px;top:244px;font-size:12px;line-height:15px;color:#000;white-space:nowrap;-webkit-text-stroke:0.15px #000">视图(V)</div>
<div class="a" style="left:519px;top:244px;font-size:12px;line-height:15px;color:#000;white-space:nowrap;-webkit-text-stroke:0.15px #000">控制(C)</div>
<div class="a" style="left:573px;top:244px;font-size:12px;line-height:15px;color:#000;white-space:nowrap;-webkit-text-stroke:0.15px #000">调试(D)</div>
<div class="a" style="left:429px;top:218px;font-size:12px;letter-spacing:0.25px;line-height:17px;color:#000;white-space:nowrap;-webkit-text-stroke:0.2px #000">多张图片的百叶窗效果-版权</div>
<svg class="a" style="left:407px;top:219px" width="18" height="17" viewBox="0 0 18 17"><rect x="3" y="2" width="13" height="13" fill="#fff" opacity="0.9"/><rect x="1" y="2" width="10" height="4" fill="#3a0a0a"/><path d="M7 13.5C9 12 10 10 11 8C12 6.5 12.8 6.2 13.8 6.2" stroke="#d42020" stroke-width="1.8" fill="none"/><path d="M9.5 9.5H12.5" stroke="#d42020" stroke-width="1.2"/><rect x="4" y="15" width="13" height="1" fill="#8a94a0"/></svg>
<div class="a" style="left:408px;top:261px;width:551px;height:402px;background:linear-gradient(to right,#ff3300 0.0px,#ff3300 10.0px,#1a75ff 10.0px,#2277ff 28.5px,#ff7700 28.5px,#ffc000 62.0px,#5599ff 62.0px,#5599ff 80.0px,#ffff00 80.0px,#bbff00 113.0px,#99c2ff 113.0px,#99c2ff 131.0px,#99ff00 131.0px,#55ff00 164.0px,#cfdffa 164.0px,#dce8fa 182.0px,#28ff00 182.0px,#00ff00 202.0px,#00ff00 202.0px,#00ff30 215.5px,#ffffff 215.5px,#ffffff 233.5px,#00ff77 233.5px,#00ffcc 266.5px,#c8a468 266.5px,#c8a468 270.5px,#b88838 270.5px,#b88838 274.0px,#996600 274.0px,#996600 284.5px,#00e5ff 284.5px,#00aaff 318.0px,#cc9900 318.0px,#d4a800 336.0px,#0066ff 336.0px,#0022ff 369.0px,#ffcc11 369.0px,#ffcc22 387.5px,#1100ff 387.5px,#5500ff 420.5px,#ffd855 420.5px,#ffd855 439.0px,#aa00ff 439.0px,#ee00ff 472.0px,#ffe8a0 472.0px,#ffe8a0 490.0px,#ff00ee 490.0px,#ff0088 523.0px,#fff3dd 523.0px,#fffce8 541.0px,#ff0033 541.0px,#ff0033 551.0px)"></div>
<div class="a" style="left:408px;top:261px;width:551px;height:1px;background:rgba(0,0,0,0.4)"></div>
<div class="a" style="left:856px;top:212px;width:56px;height:19px;border:1px solid #3c4656;border-top:none;border-radius:0 0 0 5px;background:linear-gradient(to bottom,#f2f5f9 0%,#e2e9f0 45%,#aabcce 52%,#b4c6d8 80%,#c8d8e6 100%);box-shadow:inset 0 0 0 1px rgba(255,255,255,0.55)"></div>
<div class="a" style="left:884px;top:212px;width:1px;height:18px;background:#3c4656"></div>
<div class="a" style="left:911px;top:212px;width:48px;height:19px;border:1px solid #3a2a2a;border-top:none;border-radius:0 0 5px 0;background:linear-gradient(to bottom,#eeb0a4 0%,#e4948a 40%,#c8482c 55%,#d05a40 80%,#e08070 100%);box-shadow:inset 0 0 0 1px rgba(255,220,210,0.5)"></div>
<div class="a" style="left:865px;top:221px;width:12px;height:5px;background:#fff;border:1px solid #333;border-radius:1px"></div>
<div class="a" style="left:892px;top:216px;width:11px;height:10px;background:#fff;border:1px solid #333;border-radius:1px"></div>
<div class="a" style="left:895px;top:219px;width:5px;height:4px;background:#b0c0d0;border:1px solid #333"></div>
<svg class="a" style="left:928px;top:214px" width="14" height="13" viewBox="0 0 14 13"><path d="M3.3 3.1L11.2 10.6M11.2 3.1L3.3 10.6" stroke="#3a2a2a" stroke-width="4.2"/><path d="M3.7 3.5L10.8 10.2M10.8 3.5L3.7 10.2" stroke="#fff" stroke-width="2.6"/></svg></body></html>
